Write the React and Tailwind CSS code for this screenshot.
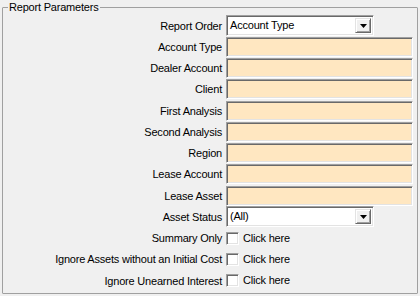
import React from "react";

const font = { fontFamily: '"Liberation Sans", Arial, sans-serif' };

function TextBox() {
  return (
    <div className="h-[20px] w-[187px] bg-[#ffe7c1] border border-t-[#a0a0a0] border-l-[#a0a0a0] border-b-[#ffffff] border-r-[#ffffff] shadow-[inset_1px_1px_0_#696969,inset_-1px_-1px_0_#e3e3e3]" />
  );
}

function Combo({ value }) {
  return (
    <div className="h-[21px] w-[148px] flex items-stretch bg-white border border-t-[#a0a0a0] border-l-[#a0a0a0] border-b-[#ffffff] border-r-[#ffffff] shadow-[inset_1px_1px_0_#696969,inset_-1px_-1px_0_#e3e3e3] p-[2px] pl-[1px]">
      <div className="flex-1 flex items-center pl-[2px] text-[11px] tracking-[-0.2px] text-black leading-none">
        {value}
      </div>
      <div className="w-[16px] flex items-center justify-center bg-[#f0f0f0] border border-t-[#e3e3e3] border-l-[#e3e3e3] border-b-[#696969] border-r-[#696969] shadow-[inset_1px_1px_0_#ffffff,inset_-1px_-1px_0_#a0a0a0]">
        <svg width="7" height="4" viewBox="0 0 7 4">
          <path d="M0 0h7L3.5 4z" fill="#000" />
        </svg>
      </div>
    </div>
  );
}

function Check() {
  return (
    <div className="flex items-center gap-[4px]">
      <div className="w-[13px] h-[13px] bg-white border border-t-[#a0a0a0] border-l-[#a0a0a0] border-b-[#ffffff] border-r-[#ffffff] shadow-[inset_1px_1px_0_#696969,inset_-1px_-1px_0_#e3e3e3]" />
      <span className="text-[11px] tracking-[-0.2px] text-black leading-none">Click here</span>
    </div>
  );
}

const rows = [
  ["Report Order", <Combo value="Account Type" />],
  ["Account Type", <TextBox />],
  ["Dealer Account", <TextBox />],
  ["Client", <TextBox />],
  ["First Analysis", <TextBox />],
  ["Second Analysis", <TextBox />],
  ["Region", <TextBox />],
  ["Lease Account", <TextBox />],
  ["Lease Asset", <TextBox />],
  ["Asset Status", <Combo value="(All)" />],
  ["Summary Only", <Check />],
  ["Ignore Assets without an Initial Cost", <Check />],
  ["Ignore Unearned Interest", <Check />],
];

export default function App() {
  return (
    <div className="w-[420px] h-[296px] bg-[#f0f0f0] pt-[7px] pl-[2px]" style={font}>
      <div className="relative w-[416px] h-[287px] border border-[#a0a0a0] rounded-[1px] pt-[7px]">
        <div className="absolute -top-[7px] left-[5px] px-[1px] bg-[#f0f0f0] text-[11px] tracking-[-0.2px] text-black leading-[13px]">
          Report Parameters
        </div>
        <div className="flex flex-col">
          {rows.map(([label, ctrl], i) => (
            <div key={i} className="h-[21.25px] flex items-center">
              <div className="w-[219px] pt-[1px] text-right text-[11px] tracking-[-0.2px] text-black leading-none whitespace-nowrap">
                {label}
              </div>
              <div className="ml-[4px] flex items-center">{ctrl}</div>
            </div>
          ))}
        </div>
      </div>
    </div>
  );
}
